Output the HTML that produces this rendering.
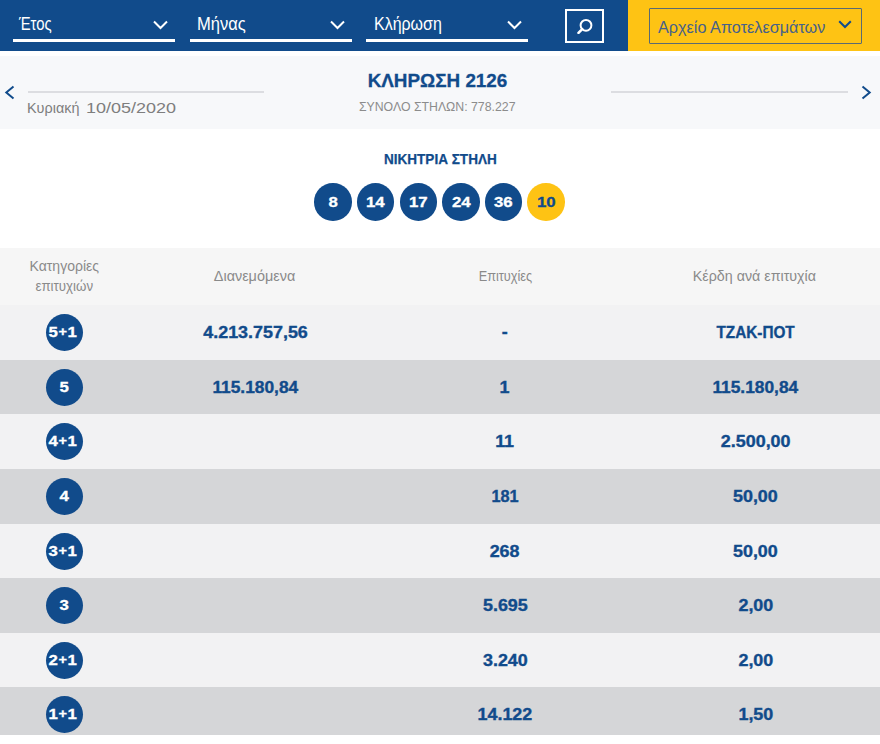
<!DOCTYPE html>
<html><head><meta charset="utf-8">
<style>
*{margin:0;padding:0;box-sizing:border-box}
html,body{width:880px;height:744px;overflow:hidden;background:#fff;font-family:"Liberation Sans",sans-serif}
.abs{position:absolute}
.s{display:inline-block;white-space:nowrap}
#hdr{position:absolute;left:0;top:0;width:880px;height:51px;background:#114b8b}
#yel{position:absolute;left:628px;top:0;width:252px;height:51px;background:#fec314}
.sel{position:absolute;top:0;height:51px;width:162px}
.sel .u{position:absolute;left:0;top:39px;width:162px;height:3px;background:#fff}
.sel .t{position:absolute;left:6px;top:14px;color:#fff;font-size:19px;line-height:20px;white-space:nowrap;transform-origin:0 50%}
.sel svg{position:absolute;top:19.5px;width:15px;height:10px}
#srch{position:absolute;left:565px;top:9px;width:39px;height:34px;border:2px solid #fff}
#arch{position:absolute;left:649px;top:8px;width:213px;height:36px;border:1px solid #5a6a72;border-radius:1px}
#arch .t{position:absolute;left:8px;top:8.5px;color:#46618b;font-size:17px;line-height:20px;white-space:nowrap;transform:scaleX(0.955);transform-origin:0 50%}
#arch svg{position:absolute;left:188.3px;top:11.3px;width:14px;height:9px}
#top{position:absolute;left:0;top:55.5px;width:880px;height:73px;background:#f7f8fa}
.ln{position:absolute;top:91px;height:2px;background:#dcdde1}
#date,#date2{position:absolute;left:27.3px;top:99px;color:#7e7e7e;font-size:15.5px;line-height:18px;white-space:nowrap}#date2{left:85.8px}
.ctr{position:absolute;left:0;width:880px;text-align:center;white-space:nowrap}
#draw{left:-2.5px;top:71px;color:#114b8b;font-weight:bold;font-size:18.5px;line-height:20px}
#draw .s{transform:scaleX(1.02);-webkit-text-stroke:0.3px #114b8b}
#tot{left:-2.8px;top:98.5px;color:#8c8c8c;font-size:12.3px;line-height:16px}
#nik{top:149.5px;color:#114b8b;font-weight:bold;font-size:14.5px;line-height:18px}
#nik .s{transform:scaleX(0.935);-webkit-text-stroke:0.25px #114b8b}
.ball{position:absolute;top:183px;width:37.6px;height:37.6px;border-radius:50%;background:#114b8b;color:#fff;font-weight:bold;font-size:15px;line-height:38px;text-align:center}
.ball .s{transform:scaleX(1.12);-webkit-text-stroke:0.3px #fff}
.ball.y{background:#fec314;color:#114b8b}
.ball.y .s{-webkit-text-stroke:0.3px #114b8b}
#thead{position:absolute;left:0;top:248px;width:880px;height:57px;background:#f6f6f6}
.th{position:absolute;color:#8a8a8a;font-size:14px;line-height:20.7px;margin-top:0.5px;text-align:center;white-space:nowrap}
.row{position:absolute;left:0;width:880px;height:54.6px;background:#f2f2f3}
.row.d{background:#d5d6d8}
.cat{position:absolute;left:45.5px;top:8.7px;width:37.6px;height:37.6px;border-radius:50%;background:#114b8b;color:#fff;font-weight:bold;font-size:15px;line-height:36.5px;text-align:center}
.cat .s{transform:scaleX(1.12);-webkit-text-stroke:0.3px #fff}
.c{position:absolute;top:0;height:54.6px;line-height:54.6px;text-align:center;color:#114b8b;font-weight:bold;font-size:16.3px;white-space:nowrap}
.c .s{transform:scaleX(1.1);-webkit-text-stroke:0.35px #114b8b}
.c2{left:155.5px;width:200px}
.c3{left:405px;width:200px}
.c4{left:655.5px;width:200px}
</style></head><body>
<div id="hdr"></div>
<div id="yel"></div>
<div class="sel" style="left:13px"><div class="t" style="transform:scaleX(0.78)">Έτος</div><svg style="left:140px" viewBox="0 0 15 10"><path d="M1 1.5 L7.5 8 L14 1.5" fill="none" stroke="#fff" stroke-width="2"/></svg><div class="u"></div></div>
<div class="sel" style="left:190px"><div class="t" style="left:7px;transform:scaleX(0.87)">Μήνας</div><svg style="left:140px" viewBox="0 0 15 10"><path d="M1 1.5 L7.5 8 L14 1.5" fill="none" stroke="#fff" stroke-width="2"/></svg><div class="u"></div></div>
<div class="sel" style="left:366px"><div class="t" style="left:8px;transform:scaleX(0.84)">Κλήρωση</div><svg style="left:141px" viewBox="0 0 15 10"><path d="M1 1.5 L7.5 8 L14 1.5" fill="none" stroke="#fff" stroke-width="2"/></svg><div class="u"></div></div>
<div id="srch"><svg class="abs" style="left:6px;top:3px" width="20" height="20" viewBox="0 0 20 20"><circle cx="13" cy="11.3" r="5.4" fill="none" stroke="#fff" stroke-width="2"/><path d="M9.2 15.1 L5.5 18.8" stroke="#fff" stroke-width="2.6" stroke-linecap="round"/></svg></div>
<div id="arch"><div class="t">Αρχείο Αποτελεσμάτων</div><svg viewBox="0 0 14 9"><path d="M1.2 1.2 L7 7 L12.8 1.2" fill="none" stroke="#114b8b" stroke-width="2"/></svg></div>

<div id="top"></div>
<svg class="abs" style="left:4px;top:85px" width="12" height="15" viewBox="0 0 12 15"><path d="M9.5 1.5 L2.3 7.5 L9.5 13.5" fill="none" stroke="#114b8b" stroke-width="2"/></svg>
<div class="ln" style="left:28px;width:236px"></div>
<div id="date"><span class="s" style="transform:scaleX(0.93);transform-origin:0 50%">Κυριακή</span></div><div id="date2"><span class="s" style="transform:scaleX(1.16);transform-origin:0 50%">10/05/2020</span></div>
<div id="draw" class="ctr"><span class="s">ΚΛΗΡΩΣΗ 2126</span></div>
<div id="tot" class="ctr"><span class="s">ΣΥΝΟΛΟ ΣΤΗΛΩΝ: 778.227</span></div>
<div class="ln" style="left:611px;width:237px"></div>
<svg class="abs" style="left:860px;top:85px" width="12" height="15" viewBox="0 0 12 15"><path d="M2.5 1.5 L9.7 7.5 L2.5 13.5" fill="none" stroke="#114b8b" stroke-width="2"/></svg>

<div id="nik" class="ctr"><span class="s">ΝΙΚΗΤΡΙΑ ΣΤΗΛΗ</span></div>
<div class="ball" style="left:314.3px"><span class="s">8</span></div>
<div class="ball" style="left:356.9px"><span class="s">14</span></div>
<div class="ball" style="left:399.5px"><span class="s">17</span></div>
<div class="ball" style="left:442.1px"><span class="s">24</span></div>
<div class="ball" style="left:484.7px"><span class="s">36</span></div>
<div class="ball y" style="left:527.3px"><span class="s">10</span></div>

<div id="thead"></div>
<div class="th" style="left:0;width:128.6px;top:255px">Κατηγορίες<br><span class="s" style="transform:scaleX(0.95)">επιτυχιών</span></div>
<div class="th c2" style="top:265.5px;margin-left:-1px"><span class="s" style="transform:scaleX(1.03)">Διανεμόμενα</span></div>
<div class="th c3" style="top:265.5px"><span class="s" style="transform:scaleX(0.91)">Επιτυχίες</span></div>
<div class="th c4" style="top:265.5px;margin-left:-1px"><span class="s" style="transform:scaleX(1.02)">Κέρδη ανά επιτυχία</span></div>

<div class="row" style="top:305px;height:55px"><div class="cat"><span class="s" style="margin-left:-3px">5<span style="font-size:13px;vertical-align:0.5px;margin:0 0.5px">+</span>1</span></div><div class="c c2"><span class="s">4.213.757,56</span></div><div class="c c3"><span class="s" style="position:relative;top:-1.5px">-</span></div><div class="c c4"><span class="s" style="transform:scaleX(0.94)">ΤΖΑΚ-ΠΟΤ</span></div></div>
<div class="row d" style="top:360px;height:54px"><div class="cat"><span class="s">5</span></div><div class="c c2"><span class="s" style="transform:scaleX(1.065)">115.180,84</span></div><div class="c c3"><span class="s">1</span></div><div class="c c4"><span class="s" style="transform:scaleX(1.065)">115.180,84</span></div></div>
<div class="row" style="top:414px;height:55px"><div class="cat"><span class="s" style="margin-left:-3px">4<span style="font-size:13px;vertical-align:0.5px;margin:0 0.5px">+</span>1</span></div><div class="c c3"><span class="s">11</span></div><div class="c c4"><span class="s">2.500,00</span></div></div>
<div class="row d" style="top:469px;height:55px"><div class="cat"><span class="s">4</span></div><div class="c c3"><span class="s" style="transform:scaleX(1.0)">181</span></div><div class="c c4"><span class="s">50,00</span></div></div>
<div class="row" style="top:524px;height:54px"><div class="cat"><span class="s" style="margin-left:-3px">3<span style="font-size:13px;vertical-align:0.5px;margin:0 0.5px">+</span>1</span></div><div class="c c3"><span class="s">268</span></div><div class="c c4"><span class="s">50,00</span></div></div>
<div class="row d" style="top:578px;height:55px"><div class="cat"><span class="s">3</span></div><div class="c c3"><span class="s">5.695</span></div><div class="c c4"><span class="s">2,00</span></div></div>
<div class="row" style="top:633px;height:54px"><div class="cat"><span class="s" style="margin-left:-3px">2<span style="font-size:13px;vertical-align:0.5px;margin:0 0.5px">+</span>1</span></div><div class="c c3"><span class="s">3.240</span></div><div class="c c4"><span class="s">2,00</span></div></div>
<div class="row d" style="top:687px;height:48px;overflow:hidden"><div class="cat"><span class="s" style="margin-left:-3px">1<span style="font-size:13px;vertical-align:0.5px;margin:0 0.5px">+</span>1</span></div><div class="c c3"><span class="s">14.122</span></div><div class="c c4"><span class="s">1,50</span></div></div>
</body></html>
